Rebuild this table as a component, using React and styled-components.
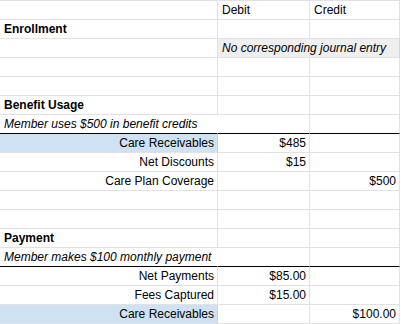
import React from "react";
import styled, { createGlobalStyle } from "styled-components";

const Global = createGlobalStyle`
  html, body { margin: 0; padding: 0; background: #fff; }
  body { font-family: "Liberation Sans", Arial, sans-serif; }
`;

const Sheet = styled.div`
  display: grid;
  grid-template-columns: 218px 92px 90px;
  grid-auto-rows: 19px;
  width: 400px;
  border-top: 1px solid #e2e2e2;
`;

const Cell = styled.div`
  box-sizing: border-box;
  grid-column: span ${(p) => p.$span || 1};
  display: flex;
  align-items: flex-end;
  justify-content: ${(p) => (p.$align === "right" ? "flex-end" : "flex-start")};
  padding: 0 3px 2px 4px;
  border-right: 1px solid
    ${(p) => (p.$noRight ? "transparent" : p.$bg ? "#c8d6e2" : "#e2e2e2")};
  border-bottom: 1px solid ${(p) => (p.$thick ? "#000" : "#e2e2e2")};
  background: ${(p) => p.$bg || "#fff"};
  font-size: 12px;
  line-height: 14px;
  color: #000;
  font-weight: ${(p) => (p.$bold ? 700 : 400)};
  font-style: ${(p) => (p.$italic ? "italic" : "normal")};
  white-space: nowrap;
  overflow: visible;
  position: relative;
  z-index: ${(p) => (p.$overflow ? 1 : 0)};
`;

const BLUE = "#cfe2f3";
const GRAY = "#efefef";

const rows = [
  [{}, { t: "Debit" }, { t: "Credit" }],
  [{ t: "Enrollment", bold: true }, {}, {}],
  [{}, { t: "No corresponding journal entry", italic: true, span: 2, bg: GRAY }],
  [{}, {}, {}],
  [{}, {}, {}],
  [{ t: "Benefit Usage", bold: true }, {}, {}],
  [{ t: "Member uses $500 in benefit credits", italic: true, thick: true, noRight: true }, { thick: true }, { thick: true }],
  [{ t: "Care Receivables", align: "right", bg: BLUE }, { t: "$485", align: "right" }, {}],
  [{ t: "Net Discounts", align: "right" }, { t: "$15", align: "right" }, {}],
  [{ t: "Care Plan Coverage", align: "right" }, {}, { t: "$500", align: "right" }],
  [{}, {}, {}],
  [{}, {}, {}],
  [{ t: "Payment", bold: true }, {}, {}],
  [{ t: "Member makes $100 monthly payment", italic: true, thick: true, noRight: true }, { thick: true }, { thick: true }],
  [{ t: "Net Payments", align: "right" }, { t: "$85.00", align: "right" }, {}],
  [{ t: "Fees Captured", align: "right" }, { t: "$15.00", align: "right" }, {}],
  [{ t: "Care Receivables", align: "right", bg: BLUE }, {}, { t: "$100.00", align: "right" }],
];

export default function App() {
  return (
    <>
      <Global />
      <Sheet>
        {rows.map((r, i) =>
          r.map((c, j) => (
            <Cell
              key={`${i}-${j}`}
              $span={c.span}
              $align={c.align}
              $bold={c.bold}
              $italic={c.italic}
              $bg={c.bg}
              $thick={c.thick}
              $noRight={c.noRight}
              $overflow={c.italic && !c.span}
            >
              {c.t || ""}
            </Cell>
          ))
        )}
      </Sheet>
    </>
  );
}
